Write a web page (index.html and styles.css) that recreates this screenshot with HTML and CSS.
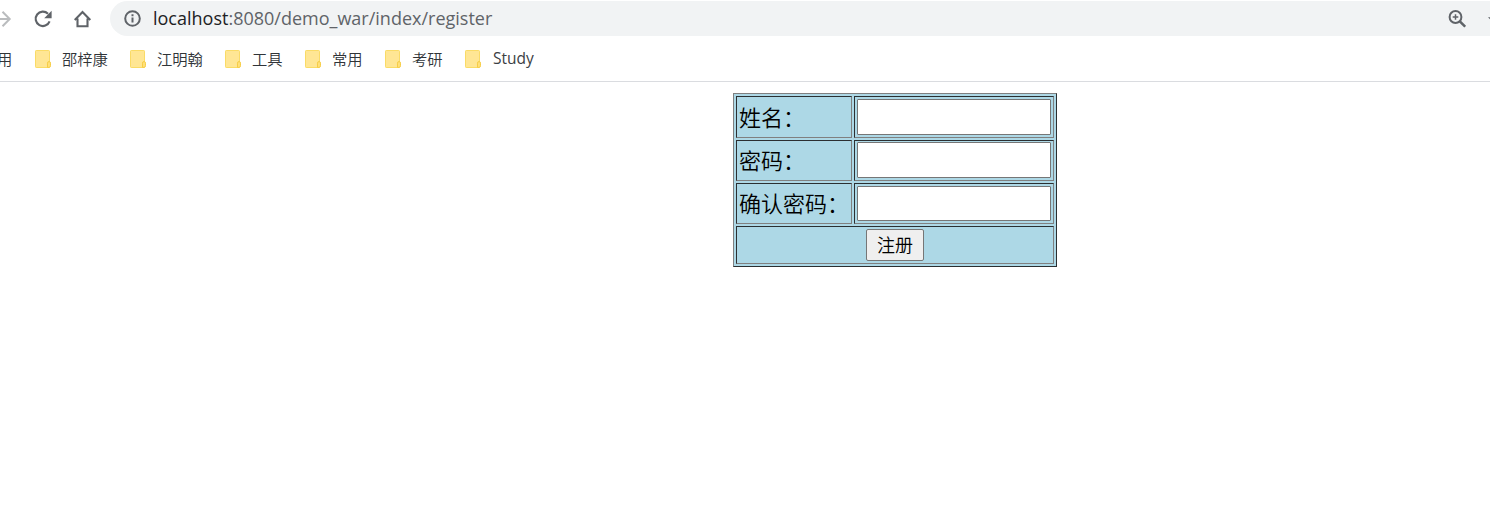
FILE: index.html
```html
<!DOCTYPE html>
<html lang="zh-CN">
<head>
<meta charset="utf-8">
<title>register</title>
<link rel="stylesheet" href="styles.css">
</head>
<body>
<svg class="defs" width="0" height="0" aria-hidden="true">
  <symbol id="folder" viewBox="0 0 16 18">
    <path d="M1.200.5h12.600q.7 0 .7.7v15.600q0 .7-.7.7H1.200q-.7 0-.7-.7V1.200q0-.7.7-.7z" fill="#ffe694" stroke="#fadb66"/>
    <path d="M12.500 17.400v-4.200q0-1.700 1.500-1.700t1.500 1.700v2.500q0 1.700-1.500 1.700z" fill="#ffe07a" stroke="#f7cd45"/>
  </symbol>
</svg>
<header class="browser">
  <div class="toolbar">
    <svg class="forward" width="12" height="18" viewBox="0 0 12 18" fill="none" stroke="#babcbe" stroke-width="2"><path d="M0 9h10M2.500 1.800L9.700 9l-7.200 7.200"/></svg>
    <svg class="reload" width="18" height="18" viewBox="0 0 18 18"><path d="M14 3.800A7.200 7.200 0 1 0 15.600 11.400" fill="none" stroke="#5f6368" stroke-width="2.100"/><path d="M17.600.8v7.400h-7.400z" fill="#5f6368"/></svg>
    <svg class="home" width="18" height="18" viewBox="0 0 18 18" fill="none" stroke="#5f6368" stroke-width="2.100"><path d="M.7 10L8.500 2l7.800 8M3.500 8.500v7.700h10V8.500"/></svg>
    <div class="address">
      <svg class="info" width="17" height="17" viewBox="0 0 17 17"><circle cx="8.500" cy="8.500" r="7.300" fill="none" stroke="#5f6368" stroke-width="2"/><path d="M7.500 7.500h2v5h-2zM7.500 4.300h2v1.900h-2z" fill="#5f6368"/></svg>
      <span class="url"><span class="host">localhost</span>:8080/demo_war/index/register</span>
      <svg class="magnify" width="18" height="18" viewBox="0 0 18 18" fill="none" stroke="#5f6368"><circle cx="7.500" cy="7" r="5.900" stroke-width="2"/><path d="M11.800 11.300l5.400 5.400" stroke-width="2.600"/><path d="M4.700 7h5.600M7.500 4.200v5.600" stroke-width="1.500"/></svg>
      <svg class="star" width="2" height="18" viewBox="0 0 2 18"><path d="M0 7.300h2v2z" fill="#5f6368"/></svg>
    </div>
  </div>
  <nav class="bookmarks">
    <span class="clipped">用</span>
    <span class="bookmark"><svg class="folder"><use href="#folder"/></svg>邵梓康</span>
    <span class="bookmark"><svg class="folder"><use href="#folder"/></svg>江明翰</span>
    <span class="bookmark short"><svg class="folder"><use href="#folder"/></svg>工具</span>
    <span class="bookmark short"><svg class="folder"><use href="#folder"/></svg>常用</span>
    <span class="bookmark short"><svg class="folder"><use href="#folder"/></svg>考研</span>
    <span class="bookmark latin"><svg class="folder"><use href="#folder"/></svg>Study</span>
  </nav>
</header>
<main>
  <table class="form">
    <tr class="first"><td class="label">姓名：</td><td class="field"><input type="text"></td></tr>
    <tr><td class="label">密码：</td><td class="field"><input type="password"></td></tr>
    <tr class="third"><td class="label">确认密码：</td><td class="field"><input type="password"></td></tr>
    <tr class="last"><td class="submit" colspan="2"><button type="button">注册</button></td></tr>
  </table>
</main>
</body>
</html>
```
FILE: styles.css
```css
* { box-sizing: border-box; }
body {
  margin: 0;
  background: #fff;
  font-family: "Noto Sans CJK SC", sans-serif;
  font-weight: 350;
  overflow: hidden;
}
svg { display: block; flex: none; }
.defs { position: absolute; }
.browser { height: 82px; border-bottom: 1px solid #dadce0; }
.toolbar { display: flex; align-items: center; height: 37px; padding-top: 1px; }
.forward, .reload, .home { margin-top: -1px; }
.reload { margin-left: 22px; }
.home { margin-left: 22px; }
.address {
  display: flex;
  align-items: center;
  flex: 1;
  height: 35px;
  margin-left: 18px;
  margin-top: -1px;
  padding-left: 14px;
  border-radius: 18px 0 0 18px;
  background: #f1f3f4;
}
.url {
  margin-left: 12px;
  color: #5f6368;
  font: 400 18px/35px "Open Sans", sans-serif;
  white-space: nowrap;
}
.host { color: #202124; }
.magnify { margin-left: auto; }
.star { margin-left: 22px; }
.bookmarks {
  display: flex;
  align-items: center;
  height: 41px;
  color: #303438;
  font-size: 15.300px;
  line-height: 22px;
  white-space: nowrap;
}
.clipped { width: 35px; text-indent: -3px; }
.bookmark { display: flex; align-items: center; width: 73px; margin-right: 22px; }
.bookmark.short { width: 58px; }
.folder { width: 16px; height: 18px; margin-right: 11px; margin-top: 3px; }
.latin { color: #3c4043; font-family: "Open Sans", sans-serif; font-size: 15.500px; font-weight: 400; }
.latin .folder { margin-right: 12px; }
main { padding: 11px 0 0 733px; }
.form {
  width: 324px;
  table-layout: fixed;
  border: 1px solid;
  border-color: #808080 #2b2f31 #2b2f31 #808080;
  border-spacing: 2px;
  background: #add8e6;
}
.form tr { height: 41px; }
.form .first { height: 42px; }
.form .last { height: 38px; }
.form td {
  padding: 0 2px;
  border: 1px solid;
  border-color: #2b2f31 #808080 #808080 #2b2f31;
}
.form .label { width: 116px; padding-bottom: 3px; font-size: 22px; line-height: 30px; color: #000; white-space: nowrap; }
.form .field { padding-top: 2px; vertical-align: top; }
.form tr:not(.first) .field { padding-top: 1px; }
.form tr.third:not(.first) .field { padding-top: 2px; }
.field input {
  display: block;
  width: 194px;
  height: 36px;
  margin: 0;
  border: 1px solid #767676;
  border-radius: 1px;
  background: #fff;
}
.third .field input { height: 35px; }
.form .submit { text-align: center; }
.submit button {
  display: block;
  width: 58px;
  height: 32px;
  margin: 0 auto;
  padding: 0 0 2px;
  border: 1px solid #767676;
  border-radius: 2px;
  background: #efefef;
  color: #000;
  font: 350 18px/28px "Noto Sans CJK SC", sans-serif;
}
```
